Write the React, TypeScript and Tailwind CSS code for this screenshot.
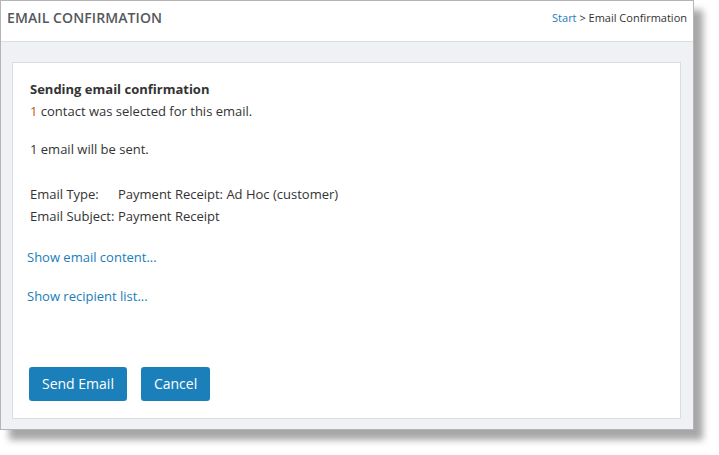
export default function App() {
  return (
    <div className="w-[719px] h-[455px] bg-white font-['Open_Sans',sans-serif]">
      <div className="w-[694px] h-[430px] border border-[#b5b5b5] bg-[#f0f1f5] flex flex-col shadow-[9px_10px_7px_rgba(0,0,0,0.35)]">
        <div className="h-[41px] shrink-0 bg-white border-b border-[#dcdde2] flex items-center justify-between pl-[6px] pr-[6px]">
          <h1 className="text-[14px] font-semibold text-[#55585d] tracking-[0.1px] -mt-[8px]">EMAIL CONFIRMATION</h1>
          <div className="text-[11px] text-[#333] -mt-[5px]">
            <a className="text-[#1a7db8]">Start</a> &gt; Email Confirmation
          </div>
        </div>
        <div className="flex-1 pt-[20px] pl-[11px] pr-[12px] pb-[10px] flex">
          <div className="flex-1 bg-white border border-[#dcdde2] pt-[15px] pl-[17px] text-[13px] leading-[22px] text-[#333] flex flex-col">
            <div className="font-bold">Sending email confirmation</div>
            <div>
              <span className="text-[#c4561a]">1</span> contact was selected for this email.
            </div>
            <div className="mt-[16px]">1 email will be sent.</div>
            <div className="mt-[23px] grid grid-cols-[88px_1fr]">
              <span>Email Type:</span>
              <span>Payment Receipt: Ad Hoc (customer)</span>
              <span>Email Subject:</span>
              <span>Payment Receipt</span>
            </div>
            <a className="mt-[19px] -ml-[3px] text-[#1a7db8]">Show email content...</a>
            <a className="mt-[17px] -ml-[3px] text-[#1a7db8]">Show recipient list...</a>
            <div className="mt-[60px] -ml-[1px] flex gap-[14px]">
              <button className="h-[34px] px-[13px] bg-[#1b80ba] text-white text-[14px] rounded-[3px]">Send Email</button>
              <button className="h-[34px] px-[13px] bg-[#1b80ba] text-white text-[14px] rounded-[3px]">Cancel</button>
            </div>
          </div>
        </div>
      </div>
    </div>
  );
}
